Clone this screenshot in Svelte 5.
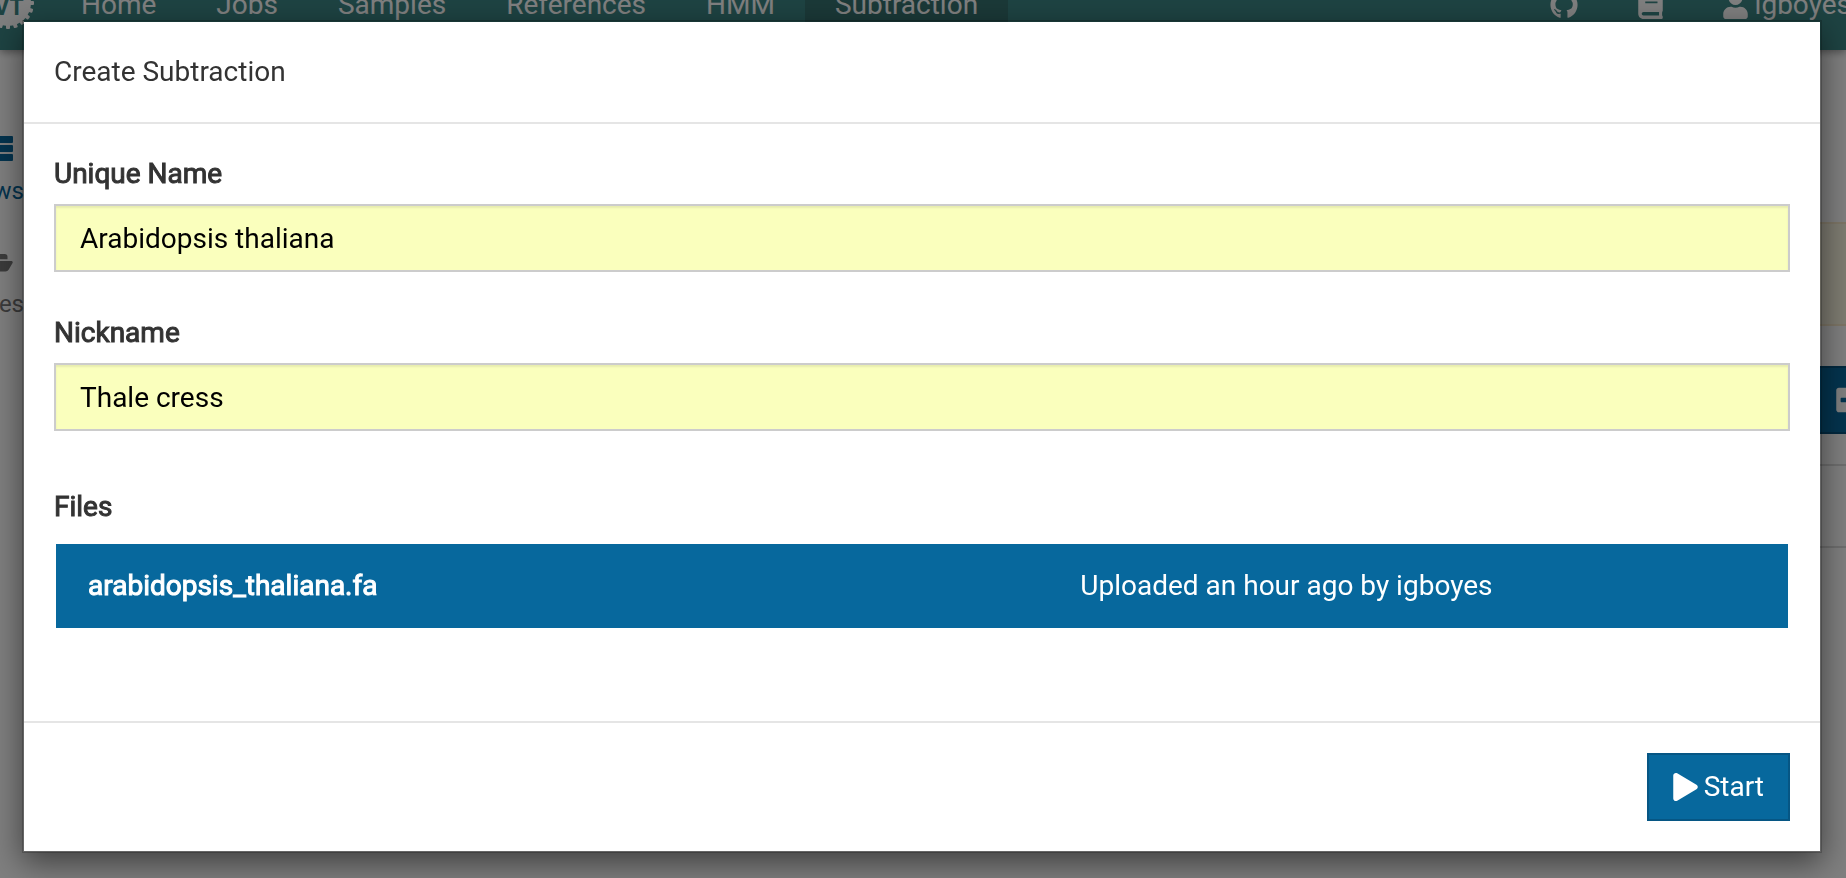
<script>
  const links = ['Home', 'Jobs', 'Samples', 'References', 'HMM', 'Subtraction'];
  let name = $state('Arabidopsis thaliana');
  let nickname = $state('Thale cress');

  const teeth = Array.from({ length: 20 }, (_, i) => i * 18);
</script>

<svelte:head><title>Subtraction</title></svelte:head>

<div class="page">
  <nav class="navbar">
    <a class="brand" href="#home" aria-label="Virtool">
      <svg viewBox="-30 -30 60 60" width="60" height="60">
        <circle r="23" />
        {#each teeth as angle}
          <rect x="-2" y="-26" width="4" height="8" rx="1" transform="rotate({angle})" />
        {/each}
        <text x="1" y="12" text-anchor="middle">VT</text>
      </svg>
    </a>
    {#each links as link}
      <a class="link" class:active={link === 'Subtraction'} href="#{link.toLowerCase()}">{link}</a>
    {/each}
    <div class="tools">
      <a class="link" href="#github" aria-label="GitHub">
        <svg viewBox="0 0 496 512" width="28" height="28"><path d="M165.9 397.4c0 2-2.300 3.600-5.200 3.600-3.300.3-5.600-1.300-5.600-3.600 0-2 2.300-3.600 5.200-3.600 3-.3 5.600 1.300 5.600 3.600zM244.800 8C106.100 8 0 113.300 0 252c0 110.900 69.800 205.800 169.500 239.200 12.800 2.300 17.300-5.600 17.300-12.100 0-6.200-.3-40.400-.3-61.400 0 0-70 15-84.700-29.800 0 0-11.400-29.100-27.800-36.600 0 0-22.900-15.700 1.600-15.400 0 0 24.900 2 38.600 25.800 21.900 38.600 58.600 27.500 72.900 20.900 2.300-16 8.800-27.100 16-33.700-55.900-6.200-112.300-14.300-112.300-110.500 0-27.500 7.600-41.300 23.600-58.900-2.600-6.500-11.100-33.300 2.600-67.900 20.900-6.500 69 27 69 27 20-5.600 41.500-8.500 62.800-8.500s42.800 2.900 62.800 8.500c0 0 48.100-33.600 69-27 13.700 34.700 5.200 61.400 2.600 67.900 16 17.700 25.800 31.500 25.800 58.900 0 96.500-58.900 104.200-114.800 110.500 9.200 7.900 17 22.900 17 46.400 0 33.700-.3 75.400-.3 83.600 0 6.500 4.600 14.400 17.300 12.100C428.200 457.800 496 362.900 496 252 496 113.300 383.500 8 244.800 8z" /></svg>
      </a>
      <a class="link" href="#docs" aria-label="Documentation">
        <svg viewBox="0 0 448 512" width="25" height="28"><path d="M448 360V24c0-13.300-10.700-24-24-24H96C43 0 0 43 0 96v320c0 53 43 96 96 96h328c13.300 0 24-10.700 24-24v-16c0-7.500-3.500-14.300-8.900-18.700-4.200-15.400-4.200-59.300 0-74.700 5.400-4.300 8.900-11.100 8.900-18.600zM128 134c0-3.300 2.700-6 6-6h212c3.300 0 6 2.700 6 6v20c0 3.300-2.700 6-6 6H134c-3.300 0-6-2.700-6-6v-20zm0 64c0-3.300 2.700-6 6-6h212c3.300 0 6 2.700 6 6v20c0 3.300-2.700 6-6 6H134c-3.300 0-6-2.700-6-6v-20zm253.400 250H96c-17.700 0-32-14.300-32-32 0-17.600 14.400-32 32-32h285.400c-1.900 17.100-1.900 46.900 0 64z" /></svg>
      </a>
      <a class="link user" href="#account">
        <svg viewBox="0 0 448 512" width="25" height="28"><path d="M224 256c70.700 0 128-57.300 128-128S294.700 0 224 0 96 57.300 96 128s57.300 128 128 128zm89.600 32h-16.700c-22.200 10.200-46.900 16-72.900 16s-50.600-5.800-72.900-16h-16.700C60.200 288 0 348.200 0 422.400V464c0 26.500 21.500 48 48 48h352c26.500 0 48-21.500 48-48v-41.600c0-74.200-60.200-134.400-134.400-134.400z" /></svg>
        <span>igboyes</span>
      </a>
    </div>
  </nav>

  <div class="columns">
    <aside class="side">
      <a class="tab current" href="#ws">
        <svg viewBox="0 0 28 26" width="28" height="26"><rect width="28" height="7" rx="1" /><rect y="9" width="28" height="7" rx="1" /><rect y="18" width="28" height="7" rx="1" /></svg>
        <span>ws</span>
      </a>
      <a class="tab" href="#es">
        <svg viewBox="0 0 576 512" width="32" height="28"><path d="M572.700 292.100l-72.400 124.200A64 64 0 0 1 445 448H45c-18.500 0-30.100-20.100-20.700-36.100l72.400-124.200A64 64 0 0 1 152 256h400c18.500 0 30.100 20.100 20.700 36.100zM152 224h328v-48c0-26.500-21.500-48-48-48H272l-64-64H48C21.500 64 0 85.500 0 112v278l69-118.500A96 96 0 0 1 152 224z" /></svg>
        <span>es</span>
      </a>
    </aside>
    <main class="content">
      <div class="alert"></div>
      <button class="create" type="button" aria-label="Create">
        <svg viewBox="0 0 448 512" width="25" height="28"><path fill-rule="evenodd" d="M400 32H48C21.500 32 0 53.500 0 80v352c0 26.500 21.500 48 48 48h352c26.500 0 48-21.500 48-48V80c0-26.500-21.500-48-48-48zm-32 252c0 6.600-5.400 12-12 12h-92v92c0 6.600-5.400 12-12 12h-56c-6.600 0-12-5.400-12-12v-92H92c-6.600 0-12-5.400-12-12v-56c0-6.600 5.400-12 12-12h92v-92c0-6.600 5.400-12 12-12h56c6.600 0 12 5.400 12 12v92h92c6.600 0 12 5.400 12 12v56z" /></svg>
      </button>
      <div class="item"></div>
    </main>
  </div>
</div>

<div class="backdrop">
  <form class="modal" role="dialog" aria-labelledby="title" onsubmit={(e) => e.preventDefault()}>
    <header id="title">Create Subtraction</header>
    <section class="body">
      <div class="group">
        <label for="name">Unique Name</label>
        <input id="name" type="text" bind:value={name} />
      </div>
      <div class="group">
        <label for="nickname">Nickname</label>
        <input id="nickname" type="text" bind:value={nickname} />
      </div>
      <div class="files">
        <h5>Files</h5>
        <button class="file" type="button" aria-pressed="true">
          <strong>arabidopsis_thaliana.fa</strong>
          <span>Uploaded an hour ago by igboyes</span>
        </button>
      </div>
    </section>
    <footer>
      <button class="start" type="submit">
        <svg viewBox="0 0 448 512" width="25" height="28"><path d="M424.400 214.700L72.400 6.600C43.800-10.300 0 6.100 0 47.900V464c0 37.500 40.700 60.100 72.400 41.300l352-208c31.400-18.500 31.500-64.100 0-82.600z" /></svg>
        <span>Start</span>
      </button>
    </footer>
  </form>
</div>

<style>
  :global(body) {
    margin: 0;
    background: #fff;
    overflow: hidden;
  }

  .page,
  .backdrop {
    font: 28px/40px Roboto, sans-serif;
    color: #333;
  }

  .page *,
  .backdrop,
  .backdrop * {
    box-sizing: border-box;
  }

  a {
    color: inherit;
    text-decoration: none;
  }

  button,
  input {
    font: inherit;
    margin: 0;
    border-radius: 0;
  }

  svg {
    display: block;
    flex: none;
    fill: currentColor;
  }

  .page {
    height: 100vh;
    overflow: hidden;
  }

  .navbar {
    display: flex;
    height: 100px;
    margin-top: -50px;
    background: #3c8786;
    color: #fff;
    box-shadow: 0 2px 8px rgba(0, 0, 0, 0.4);
  }

  .brand {
    display: flex;
    flex: none;
    width: 51px;
    padding-top: 23px;
    justify-content: center;
  }

  .brand svg {
    overflow: visible;
    margin-left: -36px;
  }

  .brand text {
    fill: #3c8786;
    font-size: 23px;
    font-weight: 700;
  }

  .link {
    display: flex;
    align-items: center;
    gap: 7px;
    padding: 10px 30px 0;
  }

  .active {
    background: #367270;
  }

  .tools {
    display: flex;
    flex: none;
    margin-left: auto;
    margin-right: -35px;
  }

  .columns {
    display: flex;
    justify-content: space-between;
  }

  .side {
    display: flex;
    flex-direction: column;
    width: 24px;
    padding-top: 86px;
    gap: 36px;
  }

  .tab {
    display: flex;
    flex-direction: column;
    align-items: flex-end;
    gap: 9px;
    color: #777;
    font-size: 24px;
  }

  .tab svg {
    margin-right: 11px;
  }

  .tab.current {
    color: #07689d;
  }

  .content {
    width: 30px;
    padding-top: 172px;
  }

  .alert {
    height: 104px;
    border: solid #faebcc;
    border-width: 2px 0;
    background: #fcf8e3;
  }

  .create {
    display: flex;
    align-items: center;
    width: 60px;
    height: 68px;
    margin: 40px 0 30px;
    padding: 0 20px;
    border: 2px solid #05527e;
    border-left: 0;
    background: #07689d;
    color: #fff;
  }

  .item {
    height: 84px;
    border: solid #ddd;
    border-width: 2px 0;
  }

  .backdrop {
    position: fixed;
    inset: 0;
    padding: 20px 24px 0 22px;
    background: rgba(0, 0, 0, 0.5);
  }

  .modal {
    border: 2px solid rgba(0, 0, 0, 0.2);
    background: #fff;
    background-clip: padding-box;
    box-shadow: 0 10px 30px rgba(0, 0, 0, 0.5);
  }

  header {
    padding: 30px;
    border-bottom: 2px solid #e5e5e5;
  }

  .body {
    display: flex;
    flex-direction: column;
    gap: 41px;
    padding: 30px 30px 93px;
  }

  .group {
    display: flex;
    flex-direction: column;
    gap: 10px;
  }

  label,
  h5,
  strong {
    margin: 0;
    font-size: 28px;
    font-weight: 400;
    -webkit-text-stroke: 1px currentColor;
  }

  input {
    height: 68px;
    padding: 0 24px;
    border: 2px solid #ccc;
    background: #faffbd;
    color: #000;
    box-shadow: inset 0 2px 2px rgba(0, 0, 0, 0.075);
    outline: 0;
  }

  .files {
    display: flex;
    flex-direction: column;
    gap: 17px;
    padding: 15px 2px 0;
  }

  h5 {
    margin-left: -2px;
  }

  .file {
    display: grid;
    grid-template-columns: 7fr 5fr;
    align-items: center;
    height: 84px;
    padding: 0;
    border: 0;
    background: #07689d;
    color: #fff;
    text-align: left;
  }

  .file strong {
    padding-left: 32px;
  }

  .file span {
    padding-left: 14px;
  }

  footer {
    display: flex;
    justify-content: flex-end;
    padding: 30px;
    border-top: 2px solid #e5e5e5;
  }

  .start {
    display: flex;
    align-items: center;
    gap: 6px;
    height: 68px;
    padding: 0 24px;
    border: 2px solid #065684;
    background: #07689d;
    color: #fff;
  }
</style>
